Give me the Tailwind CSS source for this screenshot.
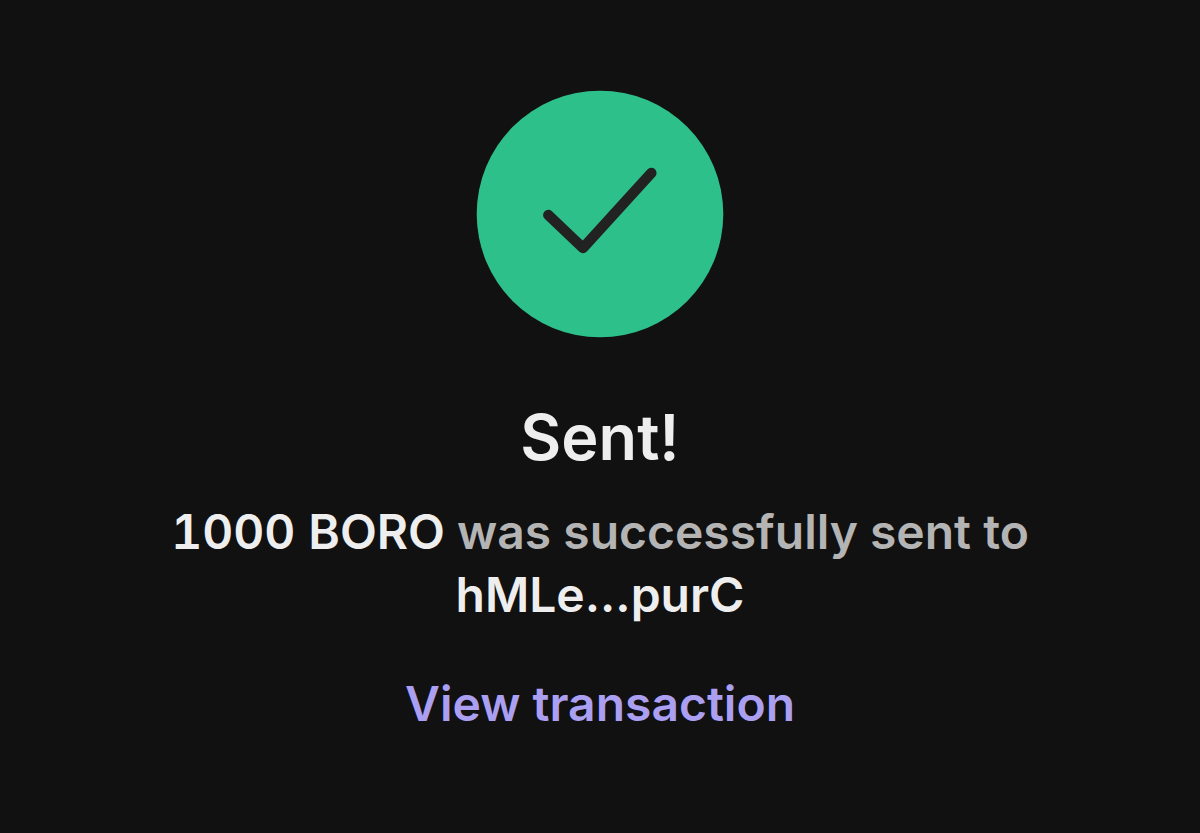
<!DOCTYPE html>
<html lang="en">
<head>
<meta charset="utf-8">
<meta name="viewport" content="width=device-width, initial-scale=1">
<title>Sent</title>
<script src="https://cdn.jsdelivr.net/npm/@tailwindcss/browser@4"></script>
</head>
<body class="min-h-screen bg-[#111111] font-['Inter',sans-serif] font-semibold text-[#eeeeee]">
<main class="flex flex-col items-center px-8 pt-[90px] pb-24 text-center">
  <svg class="size-[248px]" viewBox="0 0 248 248" fill="none" aria-hidden="true">
    <circle cx="124" cy="124" r="123.3" fill="#2ec08b"/>
    <path d="M72.3 125L107 158L175.3 83" stroke="#222222" stroke-width="10.5" stroke-linecap="round" stroke-linejoin="round"/>
  </svg>
  <h1 class="mt-[60px] text-[63px] leading-[78px]">Sent!</h1>
  <p class="mt-6 max-w-[900px] text-[48px] leading-[63px] text-[#b4b4b4]"><span class="text-[#eeeeee] tabular-nums">1000 BORO</span> was successfully sent to <span class="text-[#eeeeee]">hMLe...purC</span></p>
  <a href="#" class="mt-[46px] text-[48px] leading-[63px] text-[#ab9ff2]">View transaction</a>
</main>
</body>
</html>
